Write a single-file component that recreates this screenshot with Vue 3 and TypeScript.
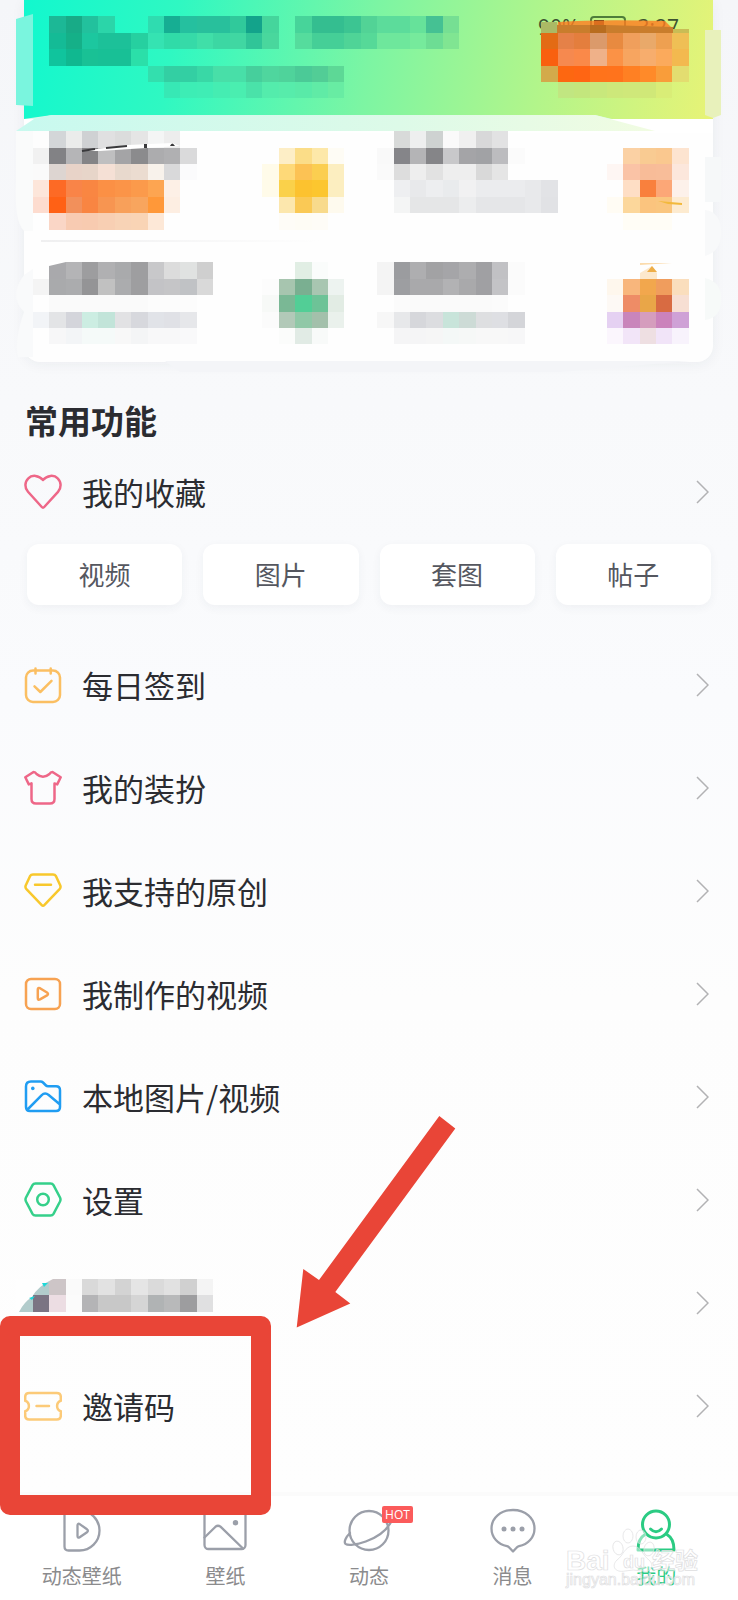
<script setup lang="ts">
interface Run {
  row: number
  col: number
  tones: string
}
interface Tile {
  x: number
  y: number
  fill: string
}
interface Entry {
  icon: string
  label: string
}

const CELL = 16.4

/* Each run lists the hex tones of neighbouring tiles; "-" leaves a tile empty. */
const headerRuns: Run[] = [
  { row: 1, col: 3, tones: '1cb896 18ab87 22c19d 2bd5a9 - - 2fdcb0 16ae93 25c09f 28c09c 28c09c 30c99b 13a38b 45d59c - 47d49a 34be90 34be90 3cc592 52d396 5cdc9b 5cdc9b 66e29a 45c193 76df93' },
  { row: 2, col: 3, tones: '14bb96 15b088 1cc79f 1cc199 1cc199 26d0a0 35e3b2 30dba8 36daa8 40dfa8 3cd7a3 40d7a2 30c598 49d79d - 55dc9d 45cf97 45cf97 4fd497 56d998 6ee79c 6ee79c 76ea9c 6ddd94 80e592' },
  { row: 3, col: 3, tones: '10c49d 10b890 19c195 18c096 18c096 2bdfa9' },
  { row: 4, col: 9, tones: '33dfae 33cfa3 33cfa3 39d8a6 48dfa8 48dfa8 46cf9c 4fd69e 4fd39b 4bca97 52cd96 5dd896' },
  { row: 5, col: 10, tones: '37e8b5 3dedb5 3fedb5 45edb2 4aeeb0 4ae2a9 54ecac 57ecab 59eaa8 60eba6 68eca3' },
  { row: 2, col: 33, tones: 'e36b15 e58148 e47e3d db9a6b e88a40 f09f5c e9a96a eea051 efbf55' },
  { row: 3, col: 33, tones: 'f9600f f6894f fa8949 efb189 fb9246 f7a560 f7ad6d fbaa5c f3b94f' },
  { row: 4, col: 33, tones: 'd3aa4b fd6711 ff6513 ff731b ff731c ff8023 ff8a29 f99d3a e3dd70' },
  { row: 5, col: 34, tones: 'c1e681 c3e67d c8e87c cde87a cfe87a d0e878 d9ed77' },
  { row: 8, col: 2, tones: 'fdfdfd d3d6d8 ebeceb cfd1d3 e0e0e1 dbdcdc e5e5e5 f4f5f5 ededed' },
  { row: 9, col: 2, tones: 'f1f1f1 828285 b5b5b7 848486 bfbfc0 a4a4a6 8b8b8d acacae b0b0b2 dadadb' },
  { row: 10, col: 2, tones: 'fafafa ddd5d1 e8d3c8 e7d5c9 f5e0d5 e8d9cd ebdcd0 f8f2eb d9d9da fbfbfc' },
  { row: 11, col: 2, tones: 'fde6da fd6a25 f98448 f98642 fb9045 fb9448 fb9a4b fda551 fdf0e6' },
  { row: 12, col: 2, tones: 'fddccf ff6115 f2905b f98542 f79551 f8a05a f8a55e ff9839 fdeee2' },
  { row: 13, col: 3, tones: 'fad6c6 f8cbb2 f8cbb0 f8cfb3 f8d3b6 f9d4b5 fde8d7' },
  { row: 9, col: 17, tones: 'fdeec6 fbdd88 fde8a9 fefcf5' },
  { row: 10, col: 16, tones: 'fffbe9 fed978 fcc254 fbce50 fceec0' },
  { row: 11, col: 16, tones: 'fffbe9 fad14a fcc22f fcc62f fceec0' },
  { row: 12, col: 17, tones: 'fce7ad fac955 f8da8c fefaee' },
  { row: 13, col: 17, tones: 'fefcf7 fefcf5 fefcf7' },
  { row: 8, col: 24, tones: 'd8dad9 eeefef ced2d1 fafafa f0f0f0 d8d8d9 e2e2e3' },
  { row: 9, col: 23, tones: 'f9f9f9 858589 b4b4b6 858588 c8c8ca a4a4a7 a1a2a5 bcbcbf fbfbfb' },
  { row: 10, col: 23, tones: 'fafafa dddddd eeeeee e2e2e2 eeeeee eeeeee d9d9d9 e5e5e5' },
  { row: 11, col: 24, tones: 'eeeff1 e8e9eb edeef0 e9ebed f1f1f2 ebecee ebecee ebecee e8e9eb e2e3e6' },
  { row: 12, col: 24, tones: 'f4f5f5 e5e6e7 e5e6e7 e5e6e7 ecedee e5e6e8 e5e6e8 e5e6e8 e8e9eb e1e2e5' },
  { row: 9, col: 38, tones: 'fbd1a4 f9cb92 fac88f fde4d0' },
  { row: 10, col: 37, tones: 'fef6f3 fac3a6 f8bc98 f8bd99 fce7dc' },
  { row: 11, col: 38, tones: 'fedec5 f9803d fca777 fdf1ea' },
  { row: 12, col: 37, tones: 'fffcf4 fcd79b fbc47e fac67f fdebd0' },
  { row: 13, col: 38, tones: 'fffdf6 fffdf6 fffdf6' },
  { row: 16, col: 3, tones: 'a9a9ac b4b4b6 9d9d9f b0b0b2 a9aaac 9e9ea0 c8c8ca dcdcdc e0e2e1 cfcfcf' },
  { row: 17, col: 2, tones: 'f4f4f4 a9aaac abacae 949496 c1c1c1 abacae 9e9ea0 c3c3c6 c5c5c7 c0c2c5 d9d9d9' },
  { row: 18, col: 3, tones: 'fafafa fafafa fafafa fafafa fafafa fafafa fcfcfc fcfcfc fcfcfc' },
  { row: 19, col: 2, tones: 'f2f4f7 e3e4e6 d4d5db ccede2 c2e4d9 e2e2e4 d7d8dd e1e3e8 e0e1e6 e6e7ea' },
  { row: 20, col: 3, tones: 'f7f7f8 f3f5f7 f5faf9 f5faf9 f8f8f8 f4f5f6 f8f8f9 f8f8f9 f9f9fa' },
  { row: 16, col: 18, tones: 'e1eee4 fafcfb' },
  { row: 17, col: 16, tones: 'fcfcfc a7c5af 7aaf91 a8c6b1 edf3f0' },
  { row: 18, col: 16, tones: 'f7f9f7 7ab895 52ce96 6dc397 e2ece4' },
  { row: 19, col: 16, tones: 'fbfbfb b2c9b8 90c8a7 a3c0ab eaf1ec' },
  { row: 20, col: 17, tones: 'fbfcfb e1ebe5 f8faf9' },
  { row: 16, col: 23, tones: 'f4f4f4 9b9c9f aeaeb0 a2a2a4 a5a5a8 adadaf a0a0a3 c1c1c4 fbfbfb' },
  { row: 17, col: 23, tones: 'f4f4f4 9d9ea1 a9a9ab a9a9ab b2b2b4 a9a9ab a0a0a3 c3c3c6 fbfbfb' },
  { row: 18, col: 24, tones: 'fbfbfb fafafa fafafa fafafa fafafa fafafa fbfbfb' },
  { row: 19, col: 23, tones: 'f7f7f7 e7e8ea d6d7db dcdde0 c8e4da cddbd6 dedfe1 dedfe3 d4d5d9' },
  { row: 20, col: 24, tones: 'f5f5f6 f5f5f6 f6f6f6 f4f8f7 f6f8f7 f8f8f8 f8f8f8 f7f7f8' },
  { row: 17, col: 37, tones: 'fef7ed f8b67c f2a74d f09d5d fadebd' },
  { row: 18, col: 37, tones: 'fdf9f5 ee8c66 e9a648 d86b42 f7dfd3' },
  { row: 19, col: 37, tones: 'e5d1f2 c985bb d59dbd cb82bb cfa1d6' },
  { row: 20, col: 37, tones: 'fbf6fd f2e5f8 eedfe2 f1e4f8 f8f3fc' },
]

const rowRuns: Run[] = [
  { row: 0, col: 2, tones: 'b2cccc cdc5c7 fafafa d9d9d9 e2e2e2 d3d3d3 e5e5e5 dadada e1e1e1 d0d0d0 f4f4f4' },
  { row: 1, col: 1, tones: 'b2cccc 7b7483 ecdde3 fbfbfb b4b4b6 c8c8c8 c8c8c8 d5d5d5 b0b3b4 b8b9ba 9d9d9f e0e0e1' },
]

function toTiles(runs: Run[]): Tile[] {
  const tiles: Tile[] = []
  for (const run of runs) {
    run.tones.split(' ').forEach((tone, i) => {
      if (tone !== '-') {
        tiles.push({ x: (run.col + i) * CELL, y: run.row * CELL, fill: '#' + tone })
      }
    })
  }
  return tiles
}

const headerTiles = toTiles(headerRuns)
const rowTiles = toTiles(rowRuns)

const categories = ['视频', '图片', '套图', '帖子']

const entries: Entry[] = [
  { icon: 'calendar', label: '每日签到' },
  { icon: 'shirt', label: '我的装扮' },
  { icon: 'gem', label: '我支持的原创' },
  { icon: 'video', label: '我制作的视频' },
  { icon: 'folder', label: '本地图片/视频' },
  { icon: 'settings', label: '设置' },
  { icon: 'masked', label: '' },
  { icon: 'ticket', label: '邀请码' },
]

const tabs: Entry[] = [
  { icon: 'live', label: '动态壁纸' },
  { icon: 'image', label: '壁纸' },
  { icon: 'planet', label: '动态' },
  { icon: 'chat', label: '消息' },
  { icon: 'user', label: '我的' },
]
</script>

<template>
  <div class="page">
    <header class="top">
      <div class="panel">
        <div class="banner">
          <div class="status">
            <span>90%</span>
            <span class="battery"><i></i></span>
            <span>3:27</span>
          </div>
        </div>
        <div class="stats"></div>
      </div>
      <svg class="mosaic" viewBox="0 0 738 380" aria-hidden="true">
        <defs>
          <linearGradient id="strip" x1="0" x2="1">
            <stop offset="0" stop-color="#c8f9ef" />
            <stop offset="0.6" stop-color="#ddfae8" />
            <stop offset="1" stop-color="#f1fce2" />
          </linearGradient>
          <linearGradient id="rule" x1="0" x2="1">
            <stop offset="0" stop-color="#efeff0" />
            <stop offset="1" stop-color="#fefefe" />
          </linearGradient>
        </defs>
        <path d="M16 19 L33 14 V106 L16 105Z" fill="#7af5de" />
        <path d="M705 30 H721 V115 L713 118 L705 115Z" fill="#e8f1bb" />
        <path d="M24 119 H713 V133 H24Z" fill="#fff" />
        <path d="M24 119 L52 115 H595 L612 119Z" fill="#d6faeb" />
        <path d="M16 131 L34 119 L52 115 H595 L655 131Z" fill="url(#strip)" />
        <path d="M16 131 H33 V231 L24 231 Q14 222 16 180Z" fill="#fafbfb" />
        <path d="M24 275 L33 269 V357 L18 357 Q14 340 24 312 Q8 296 24 275Z" fill="#f9fafb" />
        <path d="M705 157 H721 V202 H705Z" fill="#f6f8f9" />
        <path d="M705 210 Q722 212 721 235 Q720 252 705 256Z" fill="#f8f9fa" />
        <path d="M705 278 Q722 282 721 300 Q721 318 705 320Z" fill="#f7faf9" />
        <rect x="41" y="240" width="280" height="2" fill="url(#rule)" />
        <path d="M165 361 H690 L560 372 H180Z" fill="#f4f5f8" />
        <g shape-rendering="crispEdges">
          <rect v-for="(t, i) in headerTiles" :key="i" :x="t.x" :y="t.y" width="16.4" height="16.4" :fill="t.fill" />
        </g>
        <path d="M558 22 Q600 19 665 21 L673 29 L557 28Z" fill="#ff7c20" opacity="0.8" />
        <path d="M541 22 H557 V33 H541Z" fill="#abb965" />
        <path d="M557 25 H606 L673 27 V33 H557Z" fill="#c97d2c" />
        <path d="M590 25 H606 V33 H590Z" fill="#b86d1f" />
        <path d="M673 29 H689 V33 H673Z" fill="#c9bd55" />
        <path d="M49 262 H66 L49 266Z" fill="#fff" />
        <path d="M82 151 L128 145 L172 143 L180 146 L130 149 L100 151Z" fill="#fff" />
        <path d="M82 151 L95 149 M106 148 L127 146" fill="none" stroke="#3a3a3c" stroke-width="2" />
        <path d="M144 144 h3 v4 h-3z M170 146 q2 -5 5 0z" fill="#3a3a3c" />
        <path d="M658 201 L682 203 V205 L668 204Z" fill="#f2b93c" />
        <path d="M640 263 H672 L640 265Z" fill="#fbdcae" />
        <path d="M640 273 L652 266 L657 273 V279 H640Z" fill="#fce8cc" />
        <path d="M647 272 L652 266 L657 272Z" fill="#eeae48" />
      </svg>
    </header>

    <main>
      <h1>常用功能</h1>
      <button type="button" class="entry favorites">
        <svg class="icon pink" viewBox="0 0 38 38">
          <path d="M19 7 C15 2.2 8 1.5 4.3 5.3 C.5 9 .5 14.8 4 18.8 L17.8 34 Q19 35.3 20.2 34 L34 18.8 C37.5 14.8 37.5 9 33.7 5.3 C30 1.5 23 2.2 19 7Z" />
        </svg>
        <span class="label">我的收藏</span>
        <svg class="chevron" viewBox="0 0 13 24"><path d="M1 1 L12 12 L1 23" /></svg>
      </button>

      <div class="categories">
        <button v-for="c in categories" :key="c" type="button">{{ c }}</button>
      </div>

      <ul class="entries">
        <li v-for="e in entries" :key="e.icon">
          <button type="button" class="entry">
            <svg v-if="e.icon === 'calendar'" class="icon amber" viewBox="0 0 38 38">
              <rect x="2" y="4.5" width="34" height="31.5" rx="7" />
              <path d="M11.5 2.5 V7.5 M26.7 2.5 V7.5 M10.5 20.3 L16.3 26 L27.5 14.8" />
            </svg>
            <svg v-else-if="e.icon === 'shirt'" class="icon pink" viewBox="0 0 38 38">
              <path d="M9.5 3 L1.3 8.3 L4.8 15.4 L7.5 14.4 V30 Q7.5 34.5 12 34.5 H26 Q30.5 34.5 30.5 30 V14.4 L33.2 15.4 L36.7 8.3 L28.5 3 Q26.5 3 25.5 5 Q19 10.5 12.5 5 Q11.5 3 9.5 3Z" />
            </svg>
            <svg v-else-if="e.icon === 'gem'" class="icon gold" viewBox="0 0 38 38">
              <path d="M9 2.5 H29 Q31 2.5 32 4.2 L36.3 13.5 Q37 15.3 35.8 16.8 L20.5 32.8 Q19 34.3 17.5 32.8 L2.2 16.8 Q1 15.3 1.7 13.5 L6 4.2 Q7 2.5 9 2.5Z M11 12.7 H27" />
            </svg>
            <svg v-else-if="e.icon === 'video'" class="icon orange" viewBox="0 0 38 38">
              <rect x="2" y="4" width="34" height="30" rx="5" />
              <path d="M13.8 14.5 V23 Q13.8 25.5 16 24.4 L23 20.4 Q25 19 23 17.5 L16 13.2 Q13.8 12.2 13.8 14.5Z" />
            </svg>
            <svg v-else-if="e.icon === 'folder'" class="icon blue" viewBox="0 0 38 38">
              <path d="M7 3.5 H16.5 Q18 3.5 19 4.5 L22 7.5 Q22.8 8.3 24 8.3 H32 Q36 8.3 36 12.3 V29 Q36 33 32 33 H6 Q2 33 2 29 V8.5 Q2 3.5 7 3.5Z M3.5 31.5 L17.5 17.3 Q21 14 24.7 17 L36 26.5" />
              <circle class="solid" cx="8.8" cy="10.4" r="1.8" />
            </svg>
            <svg v-else-if="e.icon === 'settings'" class="icon green" viewBox="0 0 38 38">
              <path d="M11.5 2.5 H26.5 Q28.5 2.5 29.5 4.2 L36 16.5 Q37 18.5 36 20.5 L29.5 32.8 Q28.5 34.5 26.5 34.5 H11.5 Q9.5 34.5 8.5 32.8 L2 20.5 Q1 18.5 2 16.5 L8.5 4.2 Q9.5 2.5 11.5 2.5Z" />
              <circle cx="19" cy="18.5" r="5.8" />
            </svg>
            <svg v-else-if="e.icon === 'ticket'" class="icon sand" viewBox="0 0 38 38">
              <path d="M5.2 6 H32.8 Q36.8 6 36.8 10 V13.8 A5.5 5.5 0 0 0 36.8 24.2 V28.5 Q36.8 32.5 32.8 32.5 H5.2 Q1.2 32.5 1.2 28.5 V24.2 A5.5 5.5 0 0 0 1.2 13.8 V10 Q1.2 6 5.2 6Z M12.5 19 H25" />
            </svg>
            <svg v-else class="strip" viewBox="16 0 205 33">
              <g shape-rendering="crispEdges">
                <rect v-for="(t, i) in rowTiles" :key="i" :x="t.x" :y="t.y" width="16.4" height="16.4" :fill="t.fill" />
              </g>
              <path d="M16 0 H53 Q38 7 32 18 Q24 23 19 33 H16Z" fill="#fefefe" />
              <path d="M42 4 h6 l-4 4z M29 19 l6 -2 l-3 4z" fill="#1fd8d8" />
            </svg>
            <span class="label">{{ e.label }}</span>
            <svg class="chevron" viewBox="0 0 13 24"><path d="M1 1 L12 12 L1 23" /></svg>
          </button>
          <template v-if="e.icon === 'ticket'">
            <div class="marker"></div>
            <svg class="arrow" viewBox="0 0 160 212">
              <path d="M143.3 0 L159.3 12.5 L39.3 176 L54.3 187.5 L.7 211.5 L7.3 153 L23 164Z" />
            </svg>
          </template>
        </li>
      </ul>
    </main>

    <nav class="tabs">
      <a v-for="t in tabs" :key="t.icon" href="#" :class="{ active: t.icon === 'user' }">
        <svg v-if="t.icon === 'live'" viewBox="0 0 44 44">
          <path d="M7.5 2.5 H19.5 A20 20 0 0 1 19.5 42.5 H8.5 Q4.5 42.5 4.5 38.5 V6.5 Q4.5 2.5 7.5 2.5Z M17.5 17.5 V28 Q17.5 30.5 19.7 29.3 L27 24.2 Q28.8 22.7 27 21.3 L19.7 16.1 Q17.5 15 17.5 17.5Z" />
        </svg>
        <svg v-else-if="t.icon === 'image'" viewBox="0 0 44 44">
          <rect x="1.5" y="3" width="41" height="38" rx="4" />
          <path d="M1.5 29.5 L12.5 18.7 Q15 16.7 17.5 18.7 L40 40.5" />
          <circle class="solid" cx="32.5" cy="14.7" r="2.7" />
        </svg>
        <svg v-else-if="t.icon === 'planet'" viewBox="0 0 44 44">
          <circle cx="22" cy="22.5" r="19.5" />
          <path d="M3 25 C-1 29 -3.5 34 -1.5 35.800 C3 39.5 33 33 43.5 15" />
        </svg>
        <svg v-else-if="t.icon === 'chat'" viewBox="0 0 44 44">
          <path d="M22 2 C34.5 2 43.5 10 43.5 20.5 C43.5 29.5 37 36.5 28 38.2 Q26.5 38.5 25.5 39.7 L22 43.5 L18.5 39.7 Q17.5 38.5 16 38.2 C7 36.5 .5 29.5 .5 20.5 C.5 10 9.5 2 22 2Z" />
          <circle class="solid" cx="13" cy="21" r="2.5" />
          <circle class="solid" cx="22" cy="21" r="2.5" />
          <circle class="solid" cx="31" cy="21" r="2.5" />
        </svg>
        <svg v-else viewBox="0 0 44 44">
          <circle cx="22" cy="16.5" r="13.5" />
          <path d="M16.5 21 Q22 26.5 27.5 21 M11 26.5 C5 30 4 36 4 42 H40 C40 36 39 30 33 26.5" />
        </svg>
        <em v-if="t.icon === 'planet'">HOT</em>
        <span>{{ t.label }}</span>
      </a>
      <svg class="watermark" viewBox="0 0 140 66" aria-hidden="true">
        <g>
          <ellipse cx="56" cy="26" rx="5" ry="7" transform="rotate(-15 56 26)" />
          <ellipse cx="66" cy="14" rx="5" ry="7" />
          <ellipse cx="79" cy="15" rx="5" ry="7" />
          <ellipse cx="87" cy="27" rx="5" ry="7" transform="rotate(15 87 27)" />
          <path d="M71 24 C79 24 81 34 87 38 C93 44 89 51 80 49 Q71 47 63 49 C53 51 49 44 55 38 C61 34 63 24 71 24Z" />
        </g>
        <text x="4" y="48" font-size="28" font-weight="700">Bai</text>
        <text x="61" y="46" font-size="18" font-weight="700">du</text>
        <text x="90" y="47" font-size="23" font-weight="700">经验</text>
        <text x="4" y="63" font-size="16">jingyan.baidu.com</text>
      </svg>
    </nav>
  </div>
</template>

<style>
body {
  margin: 0;
}
</style>

<style scoped>
.page {
  display: flex;
  flex-direction: column;
  min-height: 100vh;
  overflow: hidden;
  font-family: "Noto Sans CJK SC", "Noto Sans", sans-serif;
  color: #2b2c31;
  background: linear-gradient(#f5f6f9 0, #f8f9fb 400px, #fafbfd 700px, #fdfdfd 1000px, #fefefe 1500px);
}
button {
  margin: 0;
  border: 0;
  background: none;
  font: inherit;
  color: inherit;
}
.top {
  position: relative;
}
.panel {
  margin: 0 25px 0 24px;
  border-radius: 0 0 16px 16px;
  background: #fefefe;
  box-shadow: 0 2px 14px rgba(40, 50, 70, 0.06);
  overflow: hidden;
}
.banner {
  height: 119px;
  background: linear-gradient(100deg, #12f8ce 0%, #2ff8c2 22%, #7cf5a3 50%, #b3f58a 75%, #e8f376 100%);
}
.stats {
  height: 243px;
}
.status {
  display: flex;
  justify-content: flex-end;
  gap: 11px;
  padding: 16px 34px 0 0;
  font: 21px/22px "Open Sans", "Noto Sans", sans-serif;
  color: #3c5230;
}
.battery {
  box-sizing: border-box;
  width: 36px;
  height: 18px;
  padding: 2px;
  border: 2px solid #4e7d3a;
  border-radius: 4px;
}
.battery i {
  display: block;
  width: 10px;
  height: 10px;
  background: #4a3a18;
}
.mosaic {
  position: absolute;
  top: 0;
  left: 0;
  width: 100%;
}
h1 {
  margin: 34px 25px 18px;
  font-size: 33px;
  line-height: 48px;
  font-weight: 700;
}
.entry {
  display: flex;
  align-items: center;
  width: 100%;
  height: 103px;
  padding: 0 29px 0 24px;
  text-align: left;
}
.favorites {
  height: 60px;
}
.icon {
  flex: none;
  width: 38px;
  height: 38px;
  fill: none;
  stroke: currentColor;
  stroke-width: 2.5;
  stroke-linecap: round;
  stroke-linejoin: round;
}
.solid {
  fill: currentColor;
  stroke: none;
}
.pink { color: #ee6788; }
.amber { color: #fbbf62; }
.gold { color: #f8c82c; }
.orange { color: #f7a252; }
.blue { color: #209df2; }
.green { color: #35d08a; }
.sand { color: #fcca78; }
.label {
  flex: 1;
  padding-left: 20px;
  font-size: 31px;
  line-height: 46px;
}
.chevron {
  flex: none;
  width: 13px;
  height: 24px;
  fill: none;
  stroke: #b2b2b4;
  stroke-width: 1.5;
}
.strip {
  flex: none;
  width: 205px;
  height: 33px;
  margin: 0 0 14px -8px;
}
.categories {
  display: grid;
  grid-template-columns: repeat(4, 1fr);
  gap: 21px;
  margin: 22px 27px 28px;
}
.categories button {
  height: 61px;
  padding: 0 0 2px;
  border-radius: 12px;
  background: #fff;
  box-shadow: 0 3px 10px rgba(40, 50, 70, 0.05);
  font-size: 26px;
  line-height: 38px;
  color: #55575f;
}
.entries {
  margin: 0;
  padding: 0;
  list-style: none;
}
.entries li {
  position: relative;
}
.marker {
  position: absolute;
  z-index: 2;
  top: -38px;
  left: 0;
  box-sizing: border-box;
  width: 271px;
  height: 199px;
  border-radius: 10px;
  pointer-events: none;
  border: 20px solid #e94537;
}
.arrow {
  position: absolute;
  z-index: 2;
  top: -238px;
  left: 296px;
  width: 160px;
  height: 212px;
  fill: #e94537;
  pointer-events: none;
}
.tabs {
  position: relative;
  display: grid;
  grid-template-columns: repeat(5, 1fr);
  margin-top: auto;
  padding: 12px 10px 9px;
  border-top: 4px solid #fbfbfb;
  background: #fff;
}
.tabs a {
  position: relative;
  display: flex;
  flex-direction: column;
  align-items: center;
  gap: 9px;
  color: #9b9fa9;
  text-decoration: none;
}
.tabs a svg {
  width: 44px;
  height: 44px;
  overflow: visible;
  fill: none;
  stroke: currentColor;
  stroke-width: 2.3;
  stroke-linejoin: round;
  stroke-linecap: round;
}
.tabs a .solid {
  fill: currentColor;
  stroke: none;
}
.tabs span {
  font-size: 20px;
  line-height: 30px;
  color: #8b8b8d;
}
.tabs .active,
.tabs .active span {
  color: #2bcb83;
}
.tabs .active svg {
  stroke-width: 3;
}
.tabs em {
  position: absolute;
  top: -2px;
  left: calc(50% + 13px);
  width: 31px;
  border-radius: 2px;
  background: #fb5b5b;
  font: 12px/17px "Open Sans", "Noto Sans", sans-serif;
  text-align: center;
  color: #fff;
}
.watermark {
  position: absolute;
  right: 36px;
  bottom: 12px;
  width: 140px;
  height: 66px;
  overflow: visible;
  fill: #fff;
  fill-opacity: 0.45;
  stroke: #dededf;
  stroke-width: 0.7;
  pointer-events: none;
  font-family: "Liberation Sans", "Noto Sans CJK SC", sans-serif;
}
</style>
